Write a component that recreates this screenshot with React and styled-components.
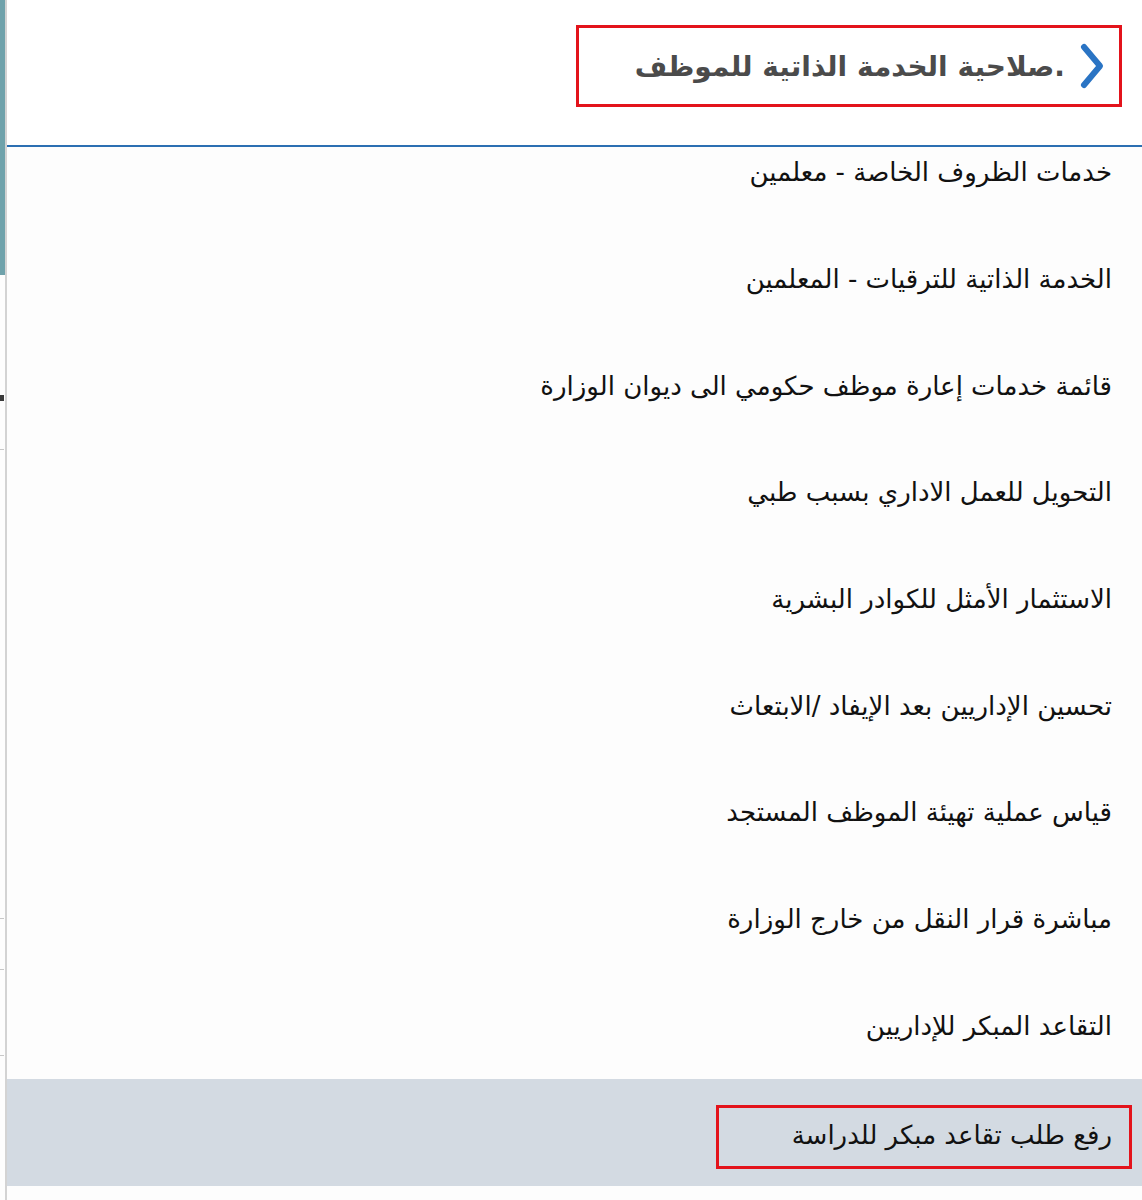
import React from "react";
import styled, { createGlobalStyle } from "styled-components";

const GlobalStyle = createGlobalStyle`
  html, body {
    margin: 0;
    padding: 0;
    background: #ffffff;
  }
  body {
    font-family: "DejaVu Sans", "Noto Sans", sans-serif;
  }
`;

const Page = styled.div`
  display: flex;
  width: 1142px;
  height: 1200px;
  overflow: hidden;
  background: #fdfdfd;
`;

const SideEdge = styled.div`
  flex: 0 0 6px;
  display: flex;
  flex-direction: column;
  border-right: 2px solid #d3d3d3;
  box-sizing: border-box;
`;

const SideTeal = styled.div`
  height: 275px;
  width: 5px;
  background: #6fa2ab;
`;

const SideMark = styled.div`
  margin-top: ${(p) => p.gap}px;
  width: 4px;
  height: ${(p) => p.h || 1}px;
  background: ${(p) => p.color || "#c8c8c8"};
`;

const Main = styled.div`
  flex: 1;
  display: flex;
  flex-direction: column;
  direction: rtl;
  min-width: 0;
`;

const Header = styled.header`
  height: 147px;
  display: flex;
  align-items: flex-start;
  padding: 25px 20px 0 0;
  box-sizing: border-box;
  border-bottom: 2px solid #2c6fb2;
  background: #ffffff;
`;

const TitleBox = styled.div`
  width: 546px;
  height: 82px;
  box-sizing: border-box;
  border: 3px solid #e3131b;
  display: flex;
  align-items: center;
  gap: 14px;
  padding-right: 14px;
`;

const Chevron = styled.svg`
  width: 26px;
  height: 48px;
  flex: none;
`;

const Title = styled.h1`
  margin: 0;
  font-size: 28px;
  font-weight: bold;
  color: #4b4b4b;
  white-space: nowrap;
`;

const Viewport = styled.div`
  flex: 1;
  overflow: hidden;
`;

const List = styled.ul`
  list-style: none;
  margin: -28px 0 0 0;
  padding: 0;
`;

const Row = styled.li`
  height: 106.7px;
  display: flex;
  align-items: center;
  padding-right: 30px;
  background: ${(p) => (p.selected ? "#d3dae2" : "transparent")};
  font-size: 26px;
  color: #111111;
  white-space: nowrap;
`;

const Marked = styled.span`
  display: inline-flex;
  align-items: center;
  height: 64px;
  margin-top: 8px;
  box-sizing: border-box;
  border: 3px solid #e3131b;
  padding: 0 17px 4px 73px;
  margin-right: -20px;
`;

const items = [
  "خدمات الظروف الخاصة - معلمين",
  "الخدمة الذاتية للترقيات - المعلمين",
  "قائمة خدمات إعارة موظف حكومي الى ديوان الوزارة",
  "التحويل للعمل الاداري بسبب طبي",
  "الاستثمار الأمثل للكوادر البشرية",
  "تحسين الإداريين بعد الإيفاد /الابتعاث",
  "قياس عملية تهيئة الموظف المستجد",
  "مباشرة قرار النقل من خارج الوزارة",
  "التقاعد المبكر للإداريين",
  "رفع طلب تقاعد مبكر للدراسة",
];

export default function App() {
  return (
    <>
      <GlobalStyle />
      <Page>
        <SideEdge>
          <SideTeal />
          <SideMark gap={120} h={6} color="#3a3a3a" />
          <SideMark gap={48} />
          <SideMark gap={468} />
          <SideMark gap={50} />
          <SideMark gap={85} />
        </SideEdge>
        <Main>
          <Header>
            <TitleBox>
              <Chevron viewBox="0 0 26 48">
                <path
                  d="M5 5 L21 24 L5 43"
                  fill="none"
                  stroke="#2a74c4"
                  strokeWidth="6"
                  strokeLinecap="round"
                  strokeLinejoin="round"
                />
              </Chevron>
              <Title>.صلاحية الخدمة الذاتية للموظف</Title>
            </TitleBox>
          </Header>
          <Viewport>
            <List>
              {items.map((item, index) => {
                const last = index === items.length - 1;
                return (
                  <Row key={index} selected={last}>
                    {last ? <Marked>{item}</Marked> : item}
                  </Row>
                );
              })}
            </List>
          </Viewport>
        </Main>
      </Page>
    </>
  );
}
